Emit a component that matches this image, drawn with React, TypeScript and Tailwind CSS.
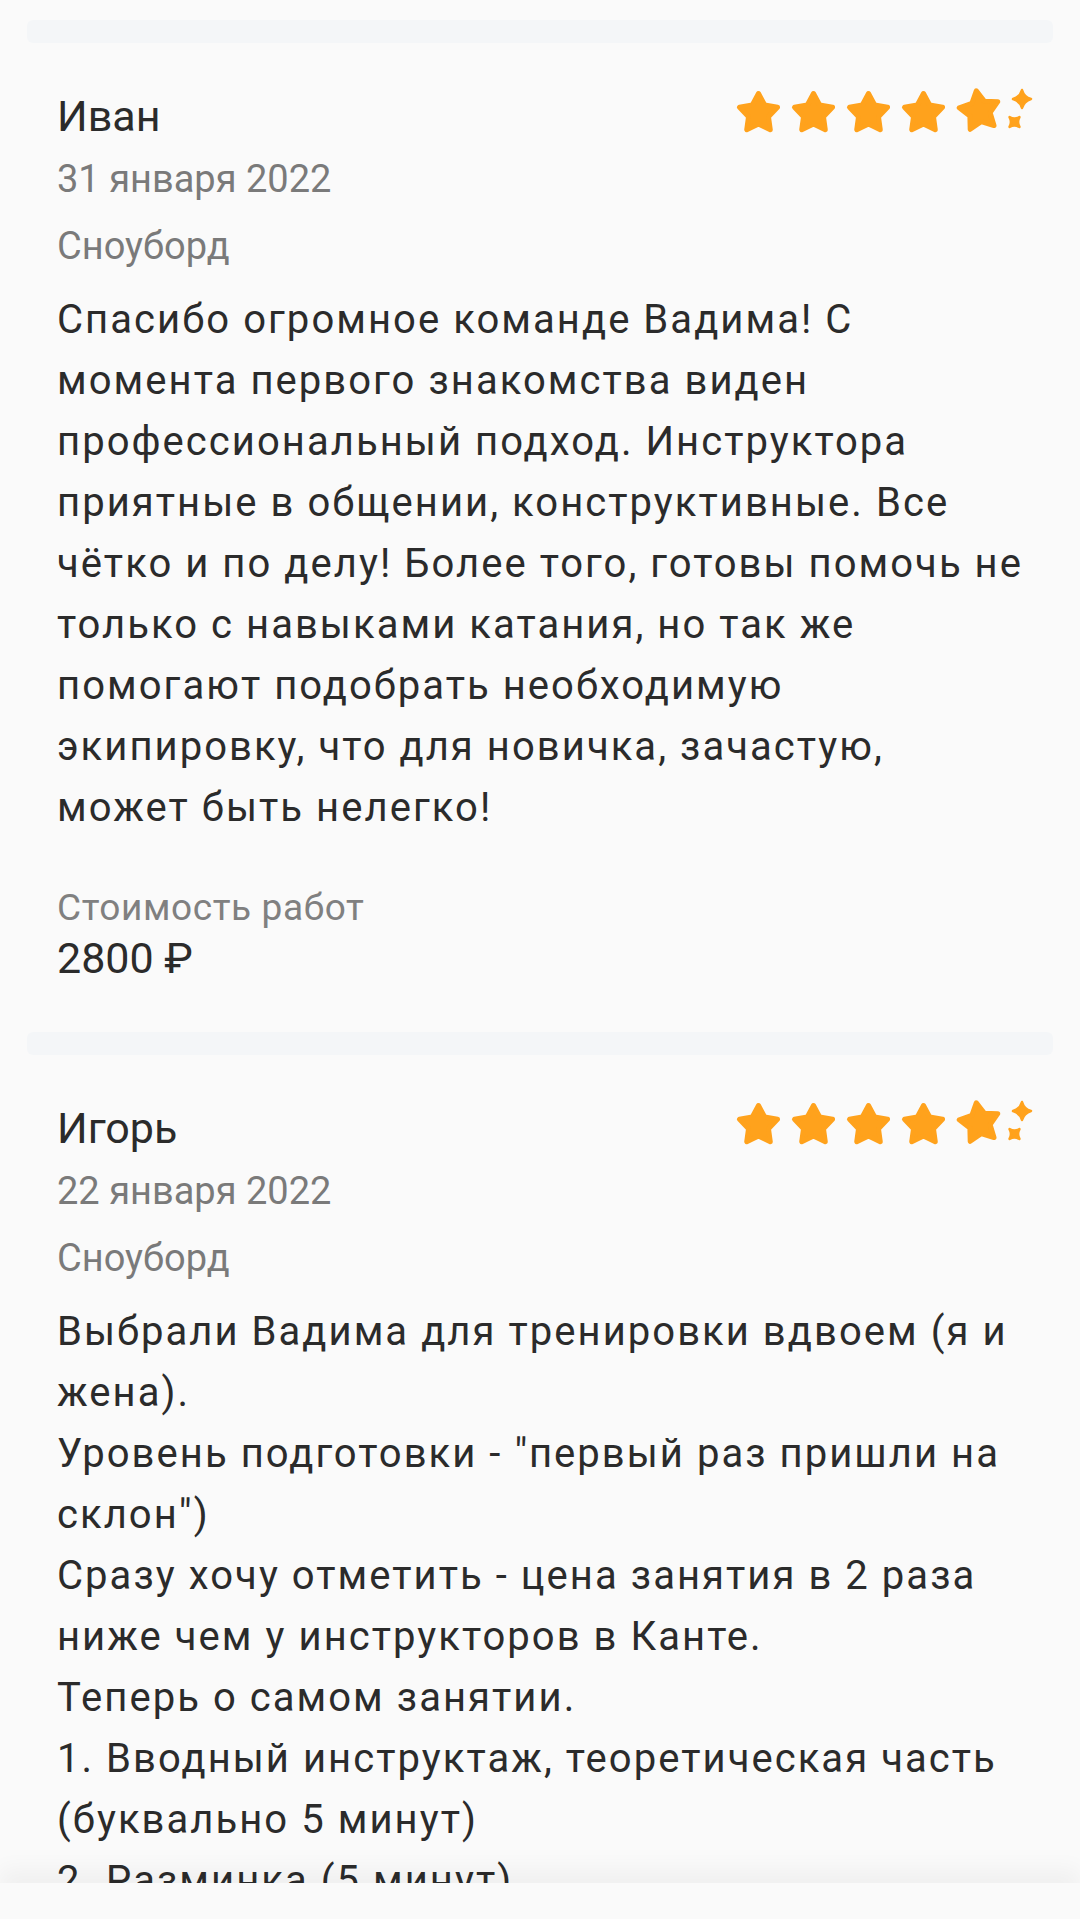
import React from "react";

const reviews = [
  {
    name: "Иван",
    date: "31 января 2022",
    category: "Сноуборд",
    text: "Спасибо огромное команде Вадима! С момента первого знакомства виден профессиональный подход. Инструктора приятные в общении, конструктивные. Все чётко и по делу! Более того, готовы помочь не только с навыками катания, но так же помогают подобрать необходимую экипировку, что для новичка, зачастую, может быть нелегко!",
    price: "2800 ₽",
  },
  {
    name: "Игорь",
    date: "22 января 2022",
    category: "Сноуборд",
    text: "Выбрали Вадима для тренировки вдвоем (я и жена).\nУровень подготовки - \"первый раз пришли на склон\")\nСразу хочу отметить - цена занятия в 2 раза ниже чем у инструкторов в Канте.\nТеперь о самом занятии.\n1. Вводный инструктаж, теоретическая часть (буквально 5 минут)\n2. Разминка (5 минут)",
  },
];

function starPoints(cx: number, cy: number, R: number, r: number) {
  const pts: string[] = [];
  for (let i = 0; i < 10; i++) {
    const rad = i % 2 === 0 ? R : r;
    const a = (Math.PI / 5) * i - Math.PI / 2;
    pts.push(`${(cx + rad * Math.cos(a)).toFixed(2)},${(cy + rad * Math.sin(a)).toFixed(2)}`);
  }
  return pts.join(" ");
}

// four-pointed sparkle with slightly concave sides
function sparkle(cx: number, cy: number, s: number) {
  const k = s * 0.22;
  return `M${cx} ${cy - s} Q${cx + k} ${cy - k} ${cx + s} ${cy} Q${cx + k} ${cy + k} ${cx} ${cy + s} Q${cx - k} ${cy + k} ${cx - s} ${cy} Q${cx - k} ${cy - k} ${cx} ${cy - s}Z`;
}

function Stars() {
  const color = "#ffa21c";
  return (
    <svg width="300" height="50" viewBox="0 0 300 50" className="-mr-[13px] -mt-[5px] shrink-0">
      {[0, 1, 2, 3].map((i) => (
        <polygon
          key={i}
          points={starPoints(22.5 + 55 * i, 28.5, 20, 10.5)}
          fill={color}
          stroke={color}
          strokeWidth={5}
          strokeLinejoin="round"
        />
      ))}
      <g transform="rotate(-9 243.5 26)">
        <polygon
          points={starPoints(243.5, 26, 20.5, 10.8)}
          fill={color}
          stroke={color}
          strokeWidth={5}
          strokeLinejoin="round"
        />
      </g>
      <path d={sparkle(286, 14, 9)} fill={color} stroke={color} strokeWidth={2.5} strokeLinejoin="round" />
      <g transform="rotate(45 278.5 37)">
        <path d={sparkle(278.5, 37, 7)} fill={color} stroke={color} strokeWidth={2.5} strokeLinejoin="round" />
      </g>
    </svg>
  );
}

function Band() {
  return <div className="mx-[27px] h-[23px] rounded-md bg-[#f4f6f8]" />;
}

export default function App() {
  return (
    <div className="relative h-[1919px] overflow-hidden bg-[#fafafa] pt-[20px] font-['Roboto',sans-serif]">
      {reviews.map((r) => (
        <div key={r.name}>
          <Band />
          <div className="px-[57px] pt-[47px] pb-[48px]">
            <div className="flex items-start justify-between">
              <h3 className="text-[43px] leading-[52px] text-[#2b2b2b]">{r.name}</h3>
              <Stars />
            </div>
            <p className="mt-[7px] text-[38px] leading-[61px] text-[#7a7a7a]">{r.date}</p>
            <p className="mt-[6px] text-[38px] leading-[61px] text-[#7a7a7a]">{r.category}</p>
            <p className="mt-[12px] whitespace-pre-line text-[40px] leading-[61px] tracking-[2.05px] text-[#2b2b2b]">
              {r.text}
            </p>
            {r.price && (
              <div className="mt-[46px]">
                <p className="text-[37px] leading-[48px] tracking-[0.6px] text-[#808080]">Стоимость работ</p>
                <p className="text-[43px] leading-[52px] text-[#2b2b2b]">{r.price}</p>
              </div>
            )}
          </div>
        </div>
      ))}
      <div className="absolute bottom-0 left-0 right-0 h-[36px] bg-[#fafafa] shadow-[0_-14px_22px_rgba(0,0,0,0.045)]" />
    </div>
  );
}
